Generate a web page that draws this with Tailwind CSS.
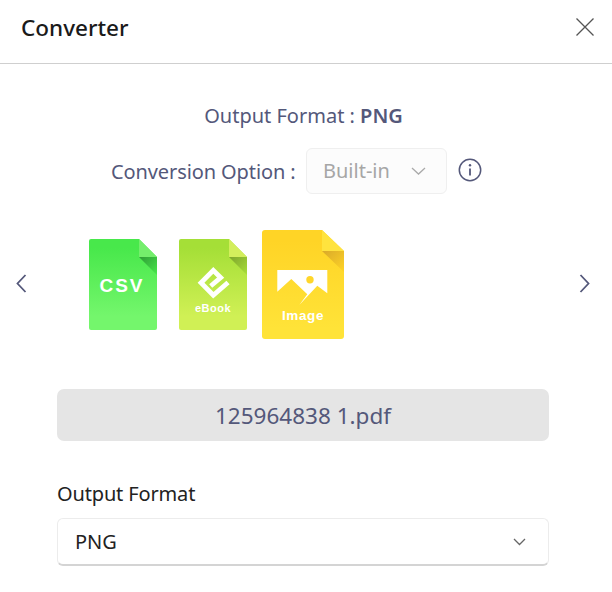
<!DOCTYPE html>
<html lang="en">
<head>
  <meta charset="UTF-8" />
  <title>Converter</title>
  <script src="https://cdn.jsdelivr.net/npm/@tailwindcss/browser@4"></script>
</head>
<body class="bg-white font-['Noto_Sans',sans-serif] w-[612px] h-[592px] overflow-hidden">

  <!-- Header -->
  <header class="h-[64px] border-b border-[#cfcfcf] flex items-center justify-between pl-[21px] pr-[18px]">
    <h1 class="text-[22.5px] leading-[30px] font-medium text-[#1a1a1a] -mt-[7px]">Converter</h1>
    <svg class="w-[18px] h-[18px] -mt-[9px]" viewBox="0 0 18 18" fill="none" stroke="#555" stroke-width="1.3"><path d="M.5.5l17 17M17.5.5l-17 17"/></svg>
  </header>

  <!-- Summary -->
  <p class="mt-[38px] pr-[5px] text-center text-[20px] leading-[28px] text-[#54587a]">Output Format : <b class="font-semibold">PNG</b></p>

  <div class="mt-[18px] ml-[111px] flex items-center h-[46px]">
    <span class="text-[20px] leading-[28px] text-[#54587a] w-[195px] tracking-[-0.1px] mt-[1px]">Conversion Option :</span>
    <div class="w-[141px] h-[46px] rounded-[6px] border border-[#efefef] bg-[#fcfcfc] flex items-center pl-[16px] pr-[20px] justify-between">
      <span class="text-[20px] text-[#a6a6a6]">Built-in</span>
      <svg class="w-[15px] h-[8px]" viewBox="0 0 15 8" fill="none" stroke="#aaa" stroke-width="1.3"><path d="M1 1l6.500 6 6.500-6"/></svg>
    </div>
    <svg class="w-[24px] h-[24px] ml-[11px] -mt-[2px]" viewBox="0 0 24 24" fill="none" stroke="#54587a"><circle cx="12" cy="12" r="10.700" stroke-width="1.500"/><path d="M12 10.500v7" stroke-width="1.800"/><circle cx="12" cy="7.300" r="1.200" fill="#54587a" stroke="none"/></svg>
  </div>

  <!-- Carousel -->
  <div class="mt-[36px] h-[109px] relative flex items-center pl-[89px]">
    <svg class="absolute left-[16px] top-[44px] w-[11px] h-[19px]" viewBox="0 0 11 19" fill="none" stroke="#54587a" stroke-width="1.800"><path d="M9.500 1L1.500 9.500 9.500 18"/></svg>

    <svg class="w-[68px] h-[91px]" viewBox="0 0 68 91">
      <defs>
        <linearGradient id="csv" x1="0" y1="0" x2="0" y2="1"><stop offset=".1" stop-color="#48e84b"/><stop offset=".85" stop-color="#74f66c"/></linearGradient>
        <linearGradient id="csvf" x1="0" y1="0" x2="1" y2="1"><stop offset="0" stop-color="#2f9c36"/><stop offset="1" stop-color="#48e84b"/></linearGradient>
      </defs>
      <path d="M2 0h48l18 18v71a2 2 0 0 1-2 2H2a2 2 0 0 1-2-2V2a2 2 0 0 1 2-2z" fill="url(#csv)"/>
      <path d="M50 0l18 18H50z" fill="#74ee6c"/>
      <path d="M50 18h18v18z" fill="url(#csvf)"/>
      <text x="33" y="52.500" text-anchor="middle" font-family="Liberation Sans, sans-serif" font-weight="700" font-size="19" letter-spacing="2" fill="#fff">CSV</text>
    </svg>

    <svg class="w-[68px] h-[91px] ml-[22px]" viewBox="0 0 68 91">
      <defs>
        <linearGradient id="ebook" x1="0" y1="0" x2="0" y2="1"><stop offset=".1" stop-color="#a5df37"/><stop offset=".85" stop-color="#d0f055"/></linearGradient>
        <linearGradient id="ebookf" x1="0" y1="0" x2="1" y2="1"><stop offset="0" stop-color="#7fa52c"/><stop offset="1" stop-color="#a8df3a"/></linearGradient>
      </defs>
      <path d="M2 0h48l18 18v71a2 2 0 0 1-2 2H2a2 2 0 0 1-2-2V2a2 2 0 0 1 2-2z" fill="url(#ebook)"/>
      <path d="M50 0l18 18H50z" fill="#d3ee5c"/>
      <path d="M50 18h18v18z" fill="url(#ebookf)"/>
      <path d="M49 43.500L34.300 56.300 22 43.700 34.300 31.300 41.700 38.700 31.700 47" fill="none" stroke="#fff" stroke-width="4.800"/>
      <text x="34" y="73" text-anchor="middle" font-family="Liberation Sans, sans-serif" font-weight="700" font-size="11" letter-spacing=".5" fill="#fff">eBook</text>
    </svg>

    <svg class="w-[82px] h-[109px] ml-[15px]" viewBox="0 0 82 109">
      <defs>
        <linearGradient id="img" x1="0" y1="0" x2="0" y2="1"><stop offset=".1" stop-color="#ffd426"/><stop offset=".9" stop-color="#ffe338"/></linearGradient>
        <linearGradient id="imgf" x1="0" y1="0" x2="1" y2="1"><stop offset="0" stop-color="#d9a92a"/><stop offset="1" stop-color="#ffd426"/></linearGradient>
      </defs>
      <path d="M3 0h57l22 21v85a3 3 0 0 1-3 3H3a3 3 0 0 1-3-3V3a3 3 0 0 1 3-3z" fill="url(#img)"/>
      <path d="M60 0l22 21H60z" fill="#ffe33e"/>
      <path d="M60 21h22v21z" fill="url(#imgf)"/>
      <path d="M15.300 40H65.300V63.300L55.300 55.700 37.300 75 45.300 64.300 29.300 49 15.300 61.700z" fill="#fff"/>
      <circle cx="48" cy="49.700" r="3.700" fill="#ffd62a"/>
      <text x="41" y="90" text-anchor="middle" font-family="Liberation Sans, sans-serif" font-weight="700" font-size="13.500" letter-spacing=".6" fill="#fff">Image</text>
    </svg>

    <svg class="absolute left-[579px] top-[44px] w-[11px] h-[19px]" viewBox="0 0 11 19" fill="none" stroke="#54587a" stroke-width="1.800"><path d="M1.500 1l8 8.500-8 8.500"/></svg>
  </div>

  <!-- File and format -->
  <div class="ml-[57px] w-[492px] mt-[50px]">
    <div class="h-[52px] rounded-[7px] bg-[#e5e5e5] flex items-center justify-center text-[22.5px] text-[#54587a] pt-[1px]">125964838 1.pdf</div>
    <label class="block mt-[39px] text-[20px] leading-[28px] tracking-[-0.15px] text-[#222]">Output Format</label>
    <div class="mt-[10px] h-[48px] rounded-[6px] border border-[#ececec] border-b-[#d4d4d4] border-b-2 bg-white flex items-center justify-between pl-[17px] pr-[22px]">
      <span class="text-[20px] text-[#222] pt-[1px]">PNG</span>
      <svg class="w-[13px] h-[8px]" viewBox="0 0 13 8" fill="none" stroke="#666" stroke-width="1.300"><path d="M1 1l5.500 5.500L12 1"/></svg>
    </div>
  </div>
</body>
</html>
